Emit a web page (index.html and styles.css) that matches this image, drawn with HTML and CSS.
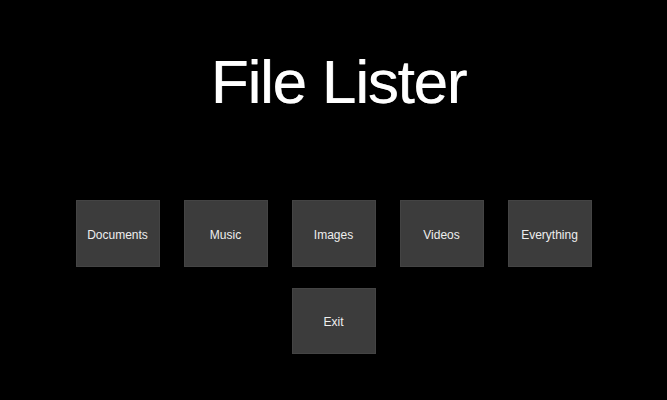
FILE: index.html
```html
<!DOCTYPE html>
<html>
<head>
<meta charset="utf-8">
<link rel="stylesheet" href="styles.css">
</head>
<body>
<main class="screen">
  <h1 class="title">File Lister</h1>
  <div class="menu">
    <div class="row">
      <button class="btn">Documents</button>
      <button class="btn">Music</button>
      <button class="btn">Images</button>
      <button class="btn">Videos</button>
      <button class="btn">Everything</button>
    </div>
    <div class="row">
      <button class="btn">Exit</button>
    </div>
  </div>
</main>
</body>
</html>
```
FILE: styles.css
```css
html, body {
  margin: 0;
  padding: 0;
  background: #000;
  width: 667px;
  height: 400px;
  overflow: hidden;
}
.screen {
  display: flex;
  flex-direction: column;
  align-items: center;
  font-family: "Liberation Sans", Arial, sans-serif;
}
.title {
  margin: 51px 0 0 10px;
  font-size: 62px;
  line-height: 62px;
  font-weight: normal;
  color: #fff;
  letter-spacing: -1.2px;
  height: 62px;
  text-shadow: 0.5px 0 0 #bbb;
}
.menu {
  margin-top: 87px;
  display: flex;
  flex-direction: column;
  align-items: center;
  gap: 21px;
}
.row {
  display: flex;
  gap: 24px;
}
.btn {
  width: 84px;
  height: 67px;
  padding: 2px 0 0 0;
  margin: 0;
  background: #3c3c3c;
  border: 1px solid #444;
  color: #eee;
  font-family: "Liberation Sans", Arial, sans-serif;
  font-size: 12px;
  display: flex;
  align-items: center;
  justify-content: center;
}
.row + .row .btn {
  height: 66px;
}
```
